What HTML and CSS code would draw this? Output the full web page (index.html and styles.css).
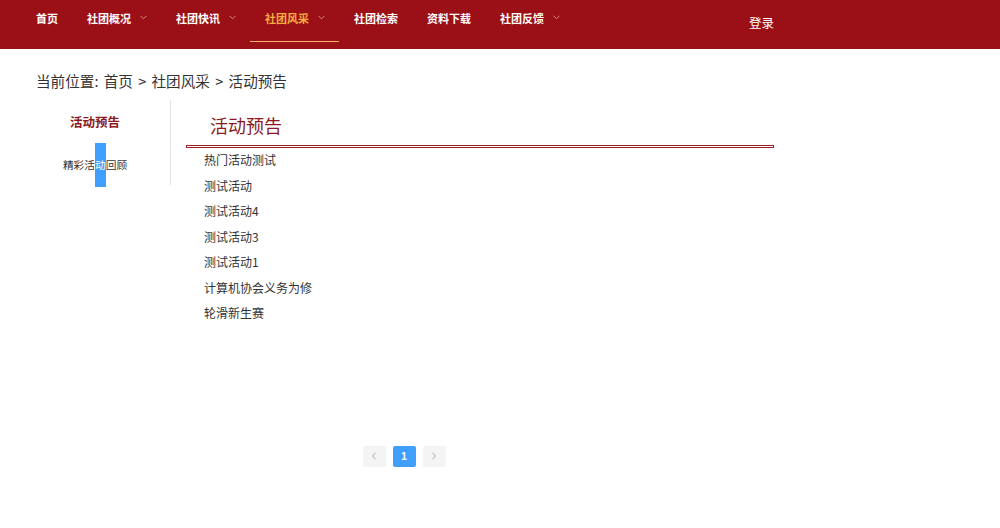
FILE: index.html
```html
<!DOCTYPE html>
<html lang="zh-CN">
<head>
    <meta charset="UTF-8">
    <title>社团风采 - 活动预告</title>
    <link rel="stylesheet" href="styles.css">
</head>
<body>
    <!-- Header -->
    <div class="header">
        <div class="header-inner">
            <ul class="nav">
                <li class="nav-item">首页</li>
                <li class="nav-item">社团概况<svg class="arrow" width="7" height="5" viewBox="0 0 7 5"><polyline points="0.5,0.8 3.5,3.8 6.5,0.8" /></svg></li>
                <li class="nav-item">社团快讯<svg class="arrow" width="7" height="5" viewBox="0 0 7 5"><polyline points="0.5,0.8 3.5,3.8 6.5,0.8" /></svg></li>
                <li class="nav-item active">社团风采<svg class="arrow" width="7" height="5" viewBox="0 0 7 5"><polyline points="0.5,0.8 3.5,3.8 6.5,0.8" /></svg></li>
                <li class="nav-item">社团检索</li>
                <li class="nav-item">资料下载</li>
                <li class="nav-item">社团反馈<svg class="arrow" width="7" height="5" viewBox="0 0 7 5"><polyline points="0.5,0.8 3.5,3.8 6.5,0.8" /></svg></li>
            </ul>
            <a class="login" href="#">登录</a>
        </div>
    </div>

    <!-- Breadcrumb -->
    <div class="crumb">当前位置: 首页 &gt; 社团风采 &gt; 活动预告</div>

    <!-- Content -->
    <div class="wrap">
        <div class="side">
            <div class="side-title">活动预告</div>
            <div class="side-item">精彩活<span class="mark">动</span>回顾</div>
        </div>
        <div class="main">
            <h3 class="main-title">活动预告</h3>
            <div class="rule"></div>
            <ul class="list">
                <li>热门活动测试</li>
                <li>测试活动</li>
                <li>测试活动4</li>
                <li>测试活动3</li>
                <li>测试活动1</li>
                <li>计算机协会义务为修</li>
                <li>轮滑新生赛</li>
            </ul>
        </div>
    </div>

    <!-- Pagination -->
    <div class="pager">
        <button class="btn-page disabled">
            <svg width="6" height="8" viewBox="0 0 6 8"><polyline points="4.5,0.8 1.5,4 4.5,7.2" /></svg>
        </button>
        <button class="btn-page current">1</button>
        <button class="btn-page disabled">
            <svg width="6" height="8" viewBox="0 0 6 8"><polyline points="1.5,0.8 4.5,4 1.5,7.2" /></svg>
        </button>
    </div>
</body>
</html>
```

FILE: styles.css
```css
/* General Styles */
* {
    margin: 0;
    padding: 0;
    box-sizing: border-box;
}

body {
    font-family: "Noto Sans CJK SC", "Liberation Sans", sans-serif;
    background: #fff;
    color: #333;
}

ul {
    list-style: none;
}

/* Header */
.header {
    height: 49px;
    background: #9b0f16;
}

.header-inner {
    width: 790px;
    display: flex;
    align-items: flex-start;
    padding-left: 21px;
}

.nav {
    display: flex;
}

.nav-item {
    display: flex;
    align-items: center;
    height: 42px;
    padding: 0 14px 6px 15px;
    font-size: 11px;
    font-weight: bold;
    color: #fff;
    border-bottom: 1px solid transparent;
    cursor: pointer;
}

.nav-item.active {
    color: #f5b040;
    border-bottom-color: #f7b46a;
}

.arrow {
    margin-left: 9px;
    fill: none;
    stroke: #d98a8d;
    stroke-width: 1;
}

.login {
    margin-left: auto;
    margin-right: 16px;
    line-height: 46px;
    font-size: 12.5px;
    color: #fff;
    text-decoration: none;
}

/* Breadcrumb */
.crumb {
    margin-top: 22px;
    padding-left: 36px;
    line-height: 20px;
    font-size: 14.6px;
    word-spacing: 2px;
    color: #333;
}

/* Content */
.wrap {
    display: flex;
    margin-top: 9px;
    padding-left: 20px;
}

.side {
    width: 151px;
    height: 85px;
    border-right: 1px solid #e4e4e4;
    text-align: center;
}

.side-title {
    padding-top: 12px;
    line-height: 20px;
    font-size: 12.5px;
    font-weight: bold;
    color: #8b1a1f;
}

.side-item {
    margin-top: 11px;
    height: 44px;
    line-height: 44px;
    font-size: 10.7px;
    color: #333;
}

.mark {
    display: inline-block;
    height: 44px;
    background: #409eff;
    color: #fff;
    vertical-align: top;
}

.main {
    width: 603px;
    padding-left: 15px;
}

.main-title {
    padding: 10px 0 0 24px;
    line-height: 30px;
    font-size: 18px;
    font-weight: normal;
    color: #8b1a22;
}

.rule {
    margin-top: 5px;
    height: 3px;
    border: 1px solid #9a2028;
    background: #fff;
}

.list {
    padding-left: 18px;
}

.list li {
    line-height: 24px;
    margin-bottom: 1.5px;
    font-size: 12px;
    color: #333;
    cursor: pointer;
}

/* Pagination */
.pager {
    width: 768px;
    margin: 119px 0 0 20px;
    display: flex;
    justify-content: center;
    gap: 7px;
}

.btn-page {
    width: 23px;
    height: 21px;
    border: none;
    border-radius: 2px;
    background: #f4f4f5;
    display: flex;
    align-items: center;
    justify-content: center;
    font-family: "Liberation Sans", sans-serif;
    font-size: 10px;
    font-weight: bold;
    color: #606266;
}

.btn-page svg {
    fill: none;
    stroke: #c0c4cc;
    stroke-width: 1.2;
}

.btn-page.current {
    background: #409eff;
    color: #fff;
}
```
